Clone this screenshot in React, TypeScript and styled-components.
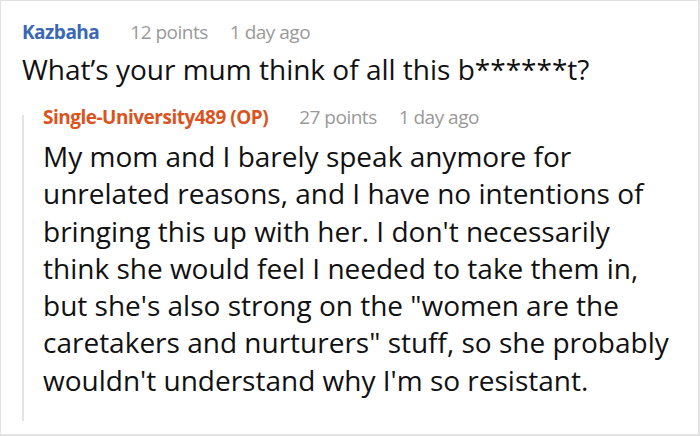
import React from 'react'
import styled, { createGlobalStyle } from 'styled-components'

const GlobalStyle = createGlobalStyle`
    html, body {
        margin     : 0;
        padding    : 0;
        background : #ffffff;
    }
`

type Comment = {
    author : string
    op?    : boolean
    points : number
    age    : string
    lines  : string[]
}

const parent: Comment = {
    author : 'Kazbaha',
    points : 12,
    age    : '1 day ago',
    lines  : ['What’s your mum think of all this b******t?'],
}

const reply: Comment = {
    author : 'Single-University489 (OP)',
    op     : true,
    points : 27,
    age    : '1 day ago',
    lines  : [
        'My mom and I barely speak anymore for',
        'unrelated reasons, and I have no intentions of',
        "bringing this up with her. I don't necessarily",
        'think she would feel I needed to take them in,',
        'but she\'s also strong on the "women are the',
        'caretakers and nurturers" stuff, so she probably',
        "wouldn't understand why I'm so resistant.",
    ],
}

const CommentBlock = ({ comment, nested }: { comment: Comment, nested?: boolean }) => (
    <>
        <Meta $nested={nested}>
            <Author $op={comment.op}>{comment.author}</Author>
            <Points>{comment.points} points</Points>
            <Age>{comment.age}</Age>
        </Meta>
        <Body $nested={nested}>
            {comment.lines.map((line, i) => (
                <Line key={i}>{line}</Line>
            ))}
        </Body>
    </>
)

const App = () => {
    return (
        <>
            <GlobalStyle />
            <Frame>
                <CommentBlock comment={parent} />
                <Thread>
                    <CommentBlock comment={reply} nested />
                </Thread>
            </Frame>
        </>
    )
}

export default App

const Frame = styled.div`
    box-sizing    : border-box;
    width         : 700px;
    height        : 436px;
    border-top    : 1px solid #e2e2e2;
    border-left   : 1px solid #e2e2e2;
    border-right  : 2px solid #e2e2e2;
    border-bottom : 2px solid #e2e2e2;
    padding       : 18px 0 0 21px;
    font-family   : "Open Sans", "Noto Sans", sans-serif;
    overflow      : hidden;
`

const Meta = styled.div<{ $nested?: boolean }>`
    display        : flex;
    align-items    : baseline;
    font-size      : 19px;
    letter-spacing : -0.5px;
    line-height    : 26px;
    margin-top     : ${p => (p.$nested ? '-11px' : '0')};
    white-space    : nowrap;
`

const Author = styled.span<{ $op?: boolean }>`
    font-weight : 700;
    color       : ${p => (p.$op ? '#d9541e' : '#3a68b4')};
`

const Points = styled.span`
    margin-left : 31px;
    color       : #999999;
`

const Age = styled.span`
    margin-left : 22px;
    color       : #999999;
`

const Body = styled.div<{ $nested?: boolean }>`
    margin-top  : ${p => (p.$nested ? '8px' : '6px')};
    font-size   : 28px;
    line-height : ${p => (p.$nested ? '37.3px' : '37px')};
    color       : #111111;
`

const Line = styled.div`
    white-space : nowrap;
`

const Thread = styled.div`
    display        : flex;
    flex-direction : column;
    margin-top     : 27px;
    border-left    : 2px solid #e4e4e4;
    padding-left   : 19px;
    padding-bottom : 22px;
    width          : fit-content;
`
